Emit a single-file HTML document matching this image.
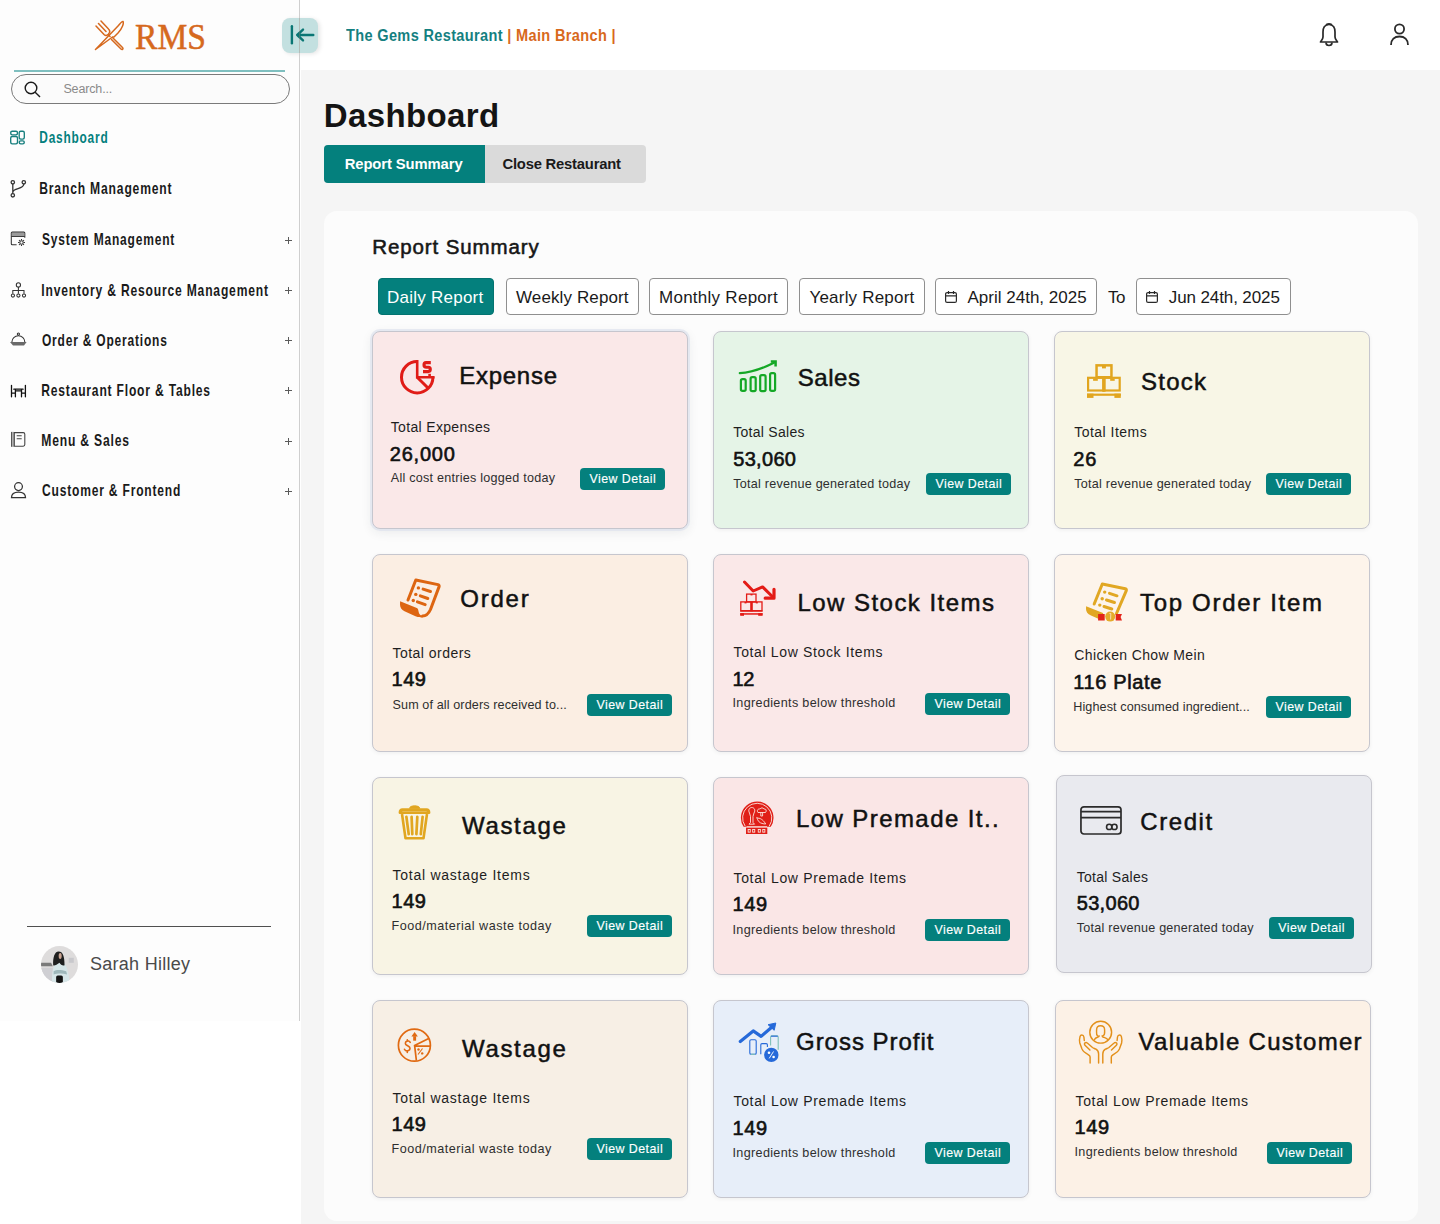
<!DOCTYPE html>
<html><head><meta charset="utf-8"><style>
*{margin:0;padding:0;box-sizing:border-box}
html,body{width:1440px;height:1224px;overflow:hidden;background:#fff;font-family:"Liberation Sans",sans-serif;color:#161616}
.a{position:absolute}
.t{position:absolute;white-space:nowrap;line-height:1}
#side{position:absolute;left:0;top:0;width:299px;height:1021px;background:#fdfdfd}
#hdr{position:absolute;left:300px;top:0;width:1140px;height:70px;background:#fff}
#main{position:absolute;left:301px;top:70px;width:1139px;height:1154px;background:#f5f5f5}
#panel{position:absolute;left:324px;top:211px;width:1094px;height:1010px;background:#fcfcfc;border-radius:13px}
.card{position:absolute;width:316px;height:198px;border:1px solid #c6c6ce;border-radius:8px;box-shadow:0 1px 4px rgba(0,0,0,0.06)}
.vdb{position:absolute;width:85px;height:22px;background:#04807d;border-radius:4px}
</style></head><body>
<div id="side"></div><div id="hdr"></div><div id="main"></div><div id="panel"></div>
<svg class="a" style="left:94px;top:20px;" width="30" height="31" viewBox="0 0 30 31" fill="none"><g stroke="#d6691e" stroke-width="1.5" fill="none" stroke-linecap="round" stroke-linejoin="round">
<path d="M1.5 29.5 L24 6 C26 3.5 28 1 29 1.5 C30 3 28.5 8 24 13 L20 17 L18.5 17 Z"/>
<path d="M2 6 L10 14.5 C11.5 16 13 15.5 14 14.5 M4.5 3.5 L12 11.5 M7 1 L14.5 9 C16 10.5 16 12.5 14.5 14 M14 14.5 L16 16.5"/>
<path d="M17.5 19.5 L27 29 C28 30 29 29.5 29 28.5 C29 28 28.5 27.5 28 27 L18.5 17.5"/>
</g></svg>
<div class="a" style="left:282px;top:18px;width:36px;height:35px;border-radius:8px;background:#c3e0e0;box-shadow:2px 1px 4px rgba(0,0,0,0.10)"></div>
<svg class="a" style="left:282px;top:18px;" width="36" height="35" viewBox="0 0 36 35" fill="none"><g stroke="#0a7674" stroke-width="2.4" stroke-linecap="round" stroke-linejoin="round" fill="none"><path d="M9.9 8.2 V25.3"/><path d="M15.2 17 H31.3 M21 11.6 L15.2 17 L21 22.4"/></g></svg>
<div class="a" style="left:299px;top:0;width:1px;height:18px;background:#cfcfcf"></div><div class="a" style="left:299px;top:53px;width:1px;height:968px;background:#cfcfcf"></div><div class="a" style="left:299px;top:18px;width:1px;height:35px;background:rgba(150,120,110,0.35)"></div>
<svg class="a" style="left:1319px;top:22px;" width="20" height="26" viewBox="0 0 20 26" fill="none"><g stroke="#2a2a2a" stroke-width="1.7" fill="none" stroke-linejoin="round"><path d="M10 2.5 C5.5 2.5 4 6 4 10 V15 C4 17 2.5 18.5 1.5 20 H18.5 C17.5 18.5 16 17 16 15 V10 C16 6 14.5 2.5 10 2.5Z"/><path d="M7.5 3.2 C7.5 1.5 12.5 1.5 12.5 3.2"/><path d="M7 20.5 C7 24.5 13 24.5 13 20.5"/></g></svg>
<svg class="a" style="left:1390px;top:23px;" width="19" height="23" viewBox="0 0 19 23" fill="none"><g stroke="#2a2a2a" stroke-width="1.8" fill="none"><circle cx="9.5" cy="6" r="4.6"/><path d="M1 22 C1 16.5 4.5 13.5 9.5 13.5 C14.5 13.5 18 16.5 18 22"/></g></svg>
<div class="a" style="left:14px;top:70px;width:271px;height:2px;background:#7fbfbf"></div>
<div class="a" style="left:11px;top:74px;width:279px;height:30px;border:1px solid #7a7a7a;border-radius:15px;background:#fbfbfb"></div>
<svg class="a" style="left:24px;top:81px;" width="17" height="17" viewBox="0 0 17 17" fill="none"><g stroke="#1a1a1a" stroke-width="1.4" fill="none"><circle cx="7" cy="7" r="5.8"/><path d="M11.2 11.2 L16 16"/></g></svg>
<svg class="a" style="left:0px;top:120px;" width="300" height="390" viewBox="0 120 300 390" fill="none">
<g stroke="#177f7e" stroke-width="1.35" fill="none">
<rect x="10.7" y="131.2" width="6.8" height="3.6" rx="1.5"/><rect x="10.7" y="136.5" width="6.8" height="7.3" rx="1.5"/>
<rect x="19.2" y="131.2" width="5.1" height="7.9" rx="1.5"/><rect x="19.2" y="140.8" width="5.1" height="3" rx="1.5"/>
</g>
<g stroke="#333" stroke-width="1.3" fill="none">
<circle cx="12.8" cy="182.3" r="1.7"/><circle cx="23.8" cy="182.3" r="1.7"/><circle cx="12.8" cy="195.3" r="1.7"/>
<path d="M12.8 184 V193.6 M23.8 184 C23.8 189.5 13.5 187.5 12.8 192"/>
</g>
<g stroke="#333" stroke-width="1.05" fill="none">
<path d="M16.6 244.8 H12.3 C11.7 244.8 11.3 244.4 11.3 243.8 V233.1 C11.3 232.5 11.7 232.1 12.3 232.1 H23.8 C24.4 232.1 24.8 232.5 24.8 233.1 V237.8"/>
<path d="M11.3 236.5 H24.8"/>
<circle cx="21.5" cy="242.5" r="1.7"/>
<path d="M21.5 239 V240.3 M21.5 244.7 V246 M18 242.5 H19.3 M23.7 242.5 H25 M19 240 L19.9 240.9 M23.1 244.1 L24 245 M19 245 L19.9 244.1 M23.1 240.9 L24 240"/>
</g>
<rect x="11.8" y="232.8" width="12.4" height="3.3" fill="#9a9a9a"/>
<g stroke="#333" stroke-width="1.05" fill="none">
<circle cx="18.4" cy="284.9" r="2.1"/><path d="M18.4 287 V293.8 M12.8 293.8 V290.5 H24 V293.8"/>
<circle cx="12.9" cy="295.5" r="1.6"/><circle cx="18.4" cy="295.5" r="1.6"/><circle cx="24" cy="295.5" r="1.6"/>
</g>
<g stroke="#333" stroke-width="1.05" fill="none">
<circle cx="18.4" cy="334.1" r="1.1"/>
<path d="M11.9 342 C11.9 338.3 14.8 335.8 18.4 335.8 C22 335.8 24.8 338.3 24.8 342"/>
</g>
<path d="M10 342 H26.6 L24 345.6 H13 Z" fill="#6a6a6a"/>
<g stroke="#111" stroke-width="1.3" fill="none" stroke-linecap="round">
<path d="M11.5 385.3 V396.8 M25.4 385.3 V396.8 M13.8 389.2 H23.1 M15.4 389.2 V396.8 M21.5 389.2 V396.8 M15.4 390.9 H21.5 M11.5 393.1 H15.4 M21.5 393.1 H25.4"/>
</g>
<rect x="11.1" y="431.9" width="1.2" height="14.9" fill="#444"/><rect x="12.2" y="431.9" width="1.9" height="14.9" fill="#aaa"/>
<g stroke="#444" stroke-width="1.1" fill="none">
<path d="M14.3 432.6 H23.2 C24.2 432.6 24.8 433.2 24.8 434.2 V444.6 C24.8 445.6 24.2 446.2 23.2 446.2 H14.3 Z"/>
<path d="M16.7 435.8 H21.7 M16.7 438.7 H21.7"/>
</g>
<g stroke="#333" stroke-width="1.25" fill="none">
<circle cx="18.5" cy="486.6" r="3.9"/>
<path d="M11.5 497.6 C11.5 494 14 492.2 18.5 492.2 C23 492.2 25.5 494 25.5 497.6 Z"/>
</g>
</svg>
<div class="a" style="left:285px;top:239.9px;width:7px;height:1.2px;background:#5a5a5a"></div><div class="a" style="left:287.9px;top:237.0px;width:1.2px;height:7px;background:#5a5a5a"></div>
<div class="a" style="left:285px;top:289.7px;width:7px;height:1.2px;background:#5a5a5a"></div><div class="a" style="left:287.9px;top:286.8px;width:1.2px;height:7px;background:#5a5a5a"></div>
<div class="a" style="left:285px;top:339.6px;width:7px;height:1.2px;background:#5a5a5a"></div><div class="a" style="left:287.9px;top:336.7px;width:1.2px;height:7px;background:#5a5a5a"></div>
<div class="a" style="left:285px;top:389.7px;width:7px;height:1.2px;background:#5a5a5a"></div><div class="a" style="left:287.9px;top:386.8px;width:1.2px;height:7px;background:#5a5a5a"></div>
<div class="a" style="left:285px;top:440.8px;width:7px;height:1.2px;background:#5a5a5a"></div><div class="a" style="left:287.9px;top:437.9px;width:1.2px;height:7px;background:#5a5a5a"></div>
<div class="a" style="left:285px;top:491.1px;width:7px;height:1.2px;background:#5a5a5a"></div><div class="a" style="left:287.9px;top:488.2px;width:1.2px;height:7px;background:#5a5a5a"></div>
<div class="a" style="left:27px;top:925.5px;width:244px;height:1.2px;background:#505050"></div>
<svg class="a" style="left:41px;top:946px;" width="37" height="37" viewBox="0 0 44 44" fill="none"><defs><clipPath id="av"><circle cx="22" cy="22" r="22"/></clipPath></defs>
<g clip-path="url(#av)">
<rect width="44" height="44" fill="#dedcdc"/>
<rect x="0" y="26" width="14" height="18" fill="#cfcfd3"/>
<path d="M0 20 H12 L14 24 H0 Z" fill="#7a7a7a"/>
<rect x="33" y="14" width="6" height="6" fill="#c8c8cc"/>
<path d="M13 44 C13 32 14 25 18 20 L27 20 C31 24 33 32 34 44 Z" fill="#d6e6e8"/>
<path d="M15 30 C18 28 24 28 30 30 L31 34 C25 32 19 33 15 34 Z" fill="#9fb8bb"/>
<path d="M14.5 23 C14 14 16 6.5 21 6.5 C26 6.5 28 12 28 23 C26 24 23 22 22 20 C19 22 16 24 14.5 23 Z" fill="#1f1f1f"/>
<ellipse cx="22.8" cy="11.8" rx="1.8" ry="3.6" fill="#caa492"/>
<rect x="18" y="35" width="8" height="9" rx="2" fill="#141414"/>
</g></svg>
<div class="a" style="left:324px;top:145px;width:322px;height:38px;border-radius:4px;background:#dadada"></div>
<div class="a" style="left:324px;top:145px;width:161px;height:38px;border-radius:4px 0 0 4px;background:#04807d"></div>
<div class="a" style="left:377.8px;top:278px;width:116.4px;height:37.4px;border-radius:4px;background:#04807d;border:1px solid #037370"></div>
<div class="a" style="left:505.5px;top:278px;width:133.2px;height:37.4px;border-radius:4px;background:#fff;border:1px solid #8f8f8f"></div>
<div class="a" style="left:649.4px;top:278px;width:139.1px;height:37.4px;border-radius:4px;background:#fff;border:1px solid #8f8f8f"></div>
<div class="a" style="left:799.4px;top:278px;width:125.2px;height:37.4px;border-radius:4px;background:#fff;border:1px solid #8f8f8f"></div>
<div class="a" style="left:935.3px;top:278px;width:162.0px;height:37.4px;border-radius:4px;background:#fff;border:1px solid #8f8f8f"></div>
<div class="a" style="left:1136.4px;top:278px;width:154.3px;height:37.4px;border-radius:4px;background:#fff;border:1px solid #8f8f8f"></div>
<svg class="a" style="left:945px;top:291px;" width="12" height="12" viewBox="0 0 12 12" fill="none"><g stroke="#2a2a2a" stroke-width="1.2" fill="none"><rect x="0.6" y="1.6" width="10.8" height="9.8" rx="1.5"/><path d="M0.6 4.8 H11.4 M3.5 0 V3 M8.5 0 V3"/></g></svg>
<svg class="a" style="left:1146px;top:291px;" width="12" height="12" viewBox="0 0 12 12" fill="none"><g stroke="#2a2a2a" stroke-width="1.2" fill="none"><rect x="0.6" y="1.6" width="10.8" height="9.8" rx="1.5"/><path d="M0.6 4.8 H11.4 M3.5 0 V3 M8.5 0 V3"/></g></svg>
<div class="card" style="left:372px;top:331px;background:#fae8e8;box-shadow:0 0 0 2px rgba(222,226,238,0.7),0 3px 12px rgba(30,40,60,0.09);"></div>
<svg class="a" style="left:395px;top:355px;overflow:visible" width="45" height="45" viewBox="0 0 45 45" fill="none"><g stroke="#e01c17" fill="none">
<path d="M22.2 6.5 A15.7 15.7 0 1 0 37.9 22.2" stroke-width="3"/>
<path d="M22.2 5 V22.2 H39.6" stroke-width="2.6"/>
<path d="M22.2 22.2 L33 33" stroke-width="3"/>
<path d="M35.8 7.6 H31 C29.3 7.6 29 9 29 10 C29 11.5 30 12.2 31.5 12.2 H33.5 C35 12.2 35.3 13.2 35.3 14.3 C35.3 15.5 34.8 16.6 33 16.6 H28" stroke-width="3.1"/>
<path d="M34.6 18.8 V21" stroke-width="2.6"/>
</g></svg>
<div class="vdb" style="left:580px;top:468px"></div>
<div class="card" style="left:713px;top:331px;background:#e5f4e7;"></div>
<svg class="a" style="left:734px;top:355px;overflow:visible" width="48" height="43" viewBox="0 0 48 43" fill="none"><g stroke="#14a826" fill="none">
<path d="M5.8 18.1 C14 17.8 26 14.8 40.5 7.5" stroke-width="2.2" stroke-linecap="round"/>
<path d="M36.8 6.6 H41.6 V11.4" stroke-width="2.5"/>
<rect x="6.9" y="24.1" width="4.8" height="11.7" rx="1.6" stroke-width="2.2"/>
<rect x="16.6" y="22.2" width="5.1" height="13.9" rx="1.6" stroke-width="2.2"/>
<rect x="26.2" y="20.2" width="5.4" height="15.9" rx="1.6" stroke-width="2.2"/>
<rect x="36.1" y="18.1" width="5" height="17.7" rx="1.6" stroke-width="2.2"/>
</g></svg>
<div class="vdb" style="left:926px;top:473px"></div>
<div class="card" style="left:1054px;top:331px;background:#f8f6e6;"></div>
<svg class="a" style="left:1082px;top:358px;overflow:visible" width="44" height="44" viewBox="0 0 44 44" fill="none"><g stroke="#e1a51f" fill="none">
<rect x="14.55" y="7.35" width="14.9" height="11.9" stroke-width="2.5"/>
<rect x="6.1" y="19.8" width="15.5" height="12.7" stroke-width="2.2"/>
<rect x="21.6" y="19.8" width="16.1" height="12.7" stroke-width="2.2"/>
</g><g fill="#e1a51f">
<rect x="20.3" y="19" width="3.4" height="14.6"/>
<rect x="20" y="7.9" width="3.9" height="2.5"/><rect x="11.1" y="20.6" width="4.7" height="2.2"/><rect x="28.2" y="20.6" width="4.5" height="2.2"/>
<rect x="5" y="35.6" width="33.8" height="2.2"/><rect x="5" y="35.6" width="6.5" height="4.3"/><rect x="32.4" y="35.6" width="6.4" height="4.3"/>
</g></svg>
<div class="vdb" style="left:1266px;top:473px"></div>
<div class="card" style="left:372px;top:554px;background:#fbeee3;"></div>
<svg class="a" style="left:396px;top:574px;overflow:visible" width="48" height="48" viewBox="0 0 48 48" fill="none"><g stroke="#dd6511" fill="none" stroke-linecap="round" stroke-linejoin="round">
<path d="M12 26 L19.8 6 L42 10.6 C43 10.9 43.4 11.8 43.1 12.6 L34.5 35.5 C32.5 40 30 42 26.5 42" stroke-width="3"/>
<path d="M27.1 15.1 L34.5 17.5 M24.3 21.8 L31.8 24.5 M21.4 27.8 L29.2 30.6" stroke-width="3"/>
</g><g fill="#dd6511">
<circle cx="22.4" cy="13.9" r="1.7"/><circle cx="19.8" cy="20.4" r="1.7"/><circle cx="17.3" cy="26.5" r="1.7"/>
<path d="M4.1 27.3 L20.8 34 C22 34.5 22.3 35.8 22.5 37.3 C22.9 40.2 24.5 41.5 26.5 42 L26.5 43.4 C24 43.5 21.5 43 19.5 42.2 L8.5 37.2 C5.5 35.8 4 33.5 4 30.5 Z"/>
</g></svg>
<div class="vdb" style="left:587px;top:694px"></div>
<div class="card" style="left:713px;top:554px;background:#fae8e8;"></div>
<svg class="a" style="left:734px;top:576px;overflow:visible" width="48" height="46" viewBox="0 0 48 46" fill="none"><g stroke="#e31b16" fill="none">
<path d="M10.5 6 L19.2 15 L28.6 10.9 L38.8 21" stroke-width="3" stroke-linecap="round" stroke-linejoin="round"/>
<path d="M40 13.3 V22.2 H31.2" stroke-width="3.2" stroke-linecap="round" stroke-linejoin="round"/>
<rect x="12.6" y="18.1" width="9.4" height="7.8" stroke-width="1.3"/>
<rect x="6.8" y="25.9" width="21.2" height="8.8" stroke-width="1.3"/>
</g><g fill="#e31b16">
<rect x="16.2" y="25.9" width="2.6" height="9.4"/>
<rect x="16.5" y="18" width="2" height="1.4"/><rect x="10.5" y="26" width="2" height="1.4"/><rect x="21.8" y="26" width="2" height="1.4"/>
<rect x="6.2" y="34.4" width="22.4" height="1.3"/>
<rect x="6.2" y="37.2" width="22.4" height="1.5"/><rect x="6.2" y="37.2" width="3.8" height="2.6"/><rect x="24.2" y="37.2" width="4.4" height="2.6"/>
</g></svg>
<div class="vdb" style="left:925px;top:693px"></div>
<div class="card" style="left:1054px;top:554px;background:#fdf4eb;"></div>
<svg class="a" style="left:1082px;top:578px;overflow:visible" width="48" height="48" viewBox="0 0 48 48" fill="none"><g stroke="#e1a723" fill="none" stroke-linecap="round" stroke-linejoin="round">
<path d="M12.2 26 L20.3 6 L43.3 10.7 C44.3 11 44.6 11.9 44.3 12.6 L34.5 35.5" stroke-width="3"/>
<path d="M27.5 15.3 L35 17.8 M24.5 22 L32.5 24.5 M22 28.5 L29.8 31" stroke-width="3"/>
</g><g fill="#e1a723">
<circle cx="22.7" cy="14.1" r="1.7"/><circle cx="20.2" cy="20.8" r="1.7"/><circle cx="17.8" cy="27.1" r="1.7"/>
<path d="M4.1 28.2 L21 35 L22 41 L18 41.5 L9 37.5 C5.5 36 4 33.5 4 31 Z"/>
</g>
<path d="M16.1 35.9 H22.7 V42.4 H16.1 Z M33.7 35.9 H40 L38.6 39.1 L40 42.4 H33.7 Z" fill="#e32419"/>
<circle cx="28.2" cy="38.6" r="5" fill="#e5ab2a"/>
<path d="M27.5 35.5 L28.8 35.5 L28.6 41.5" stroke="#f6dcb0" stroke-width="1"/></svg>
<div class="vdb" style="left:1266px;top:696px"></div>
<div class="card" style="left:372px;top:777px;background:#f8f4e4;"></div>
<svg class="a" style="left:392px;top:800px;overflow:visible" width="44" height="44" viewBox="0 0 44 44" fill="none"><g stroke="#e1a620" fill="none" stroke-linejoin="round">
<path d="M17.6 8.3 C17.6 5 27.7 5 27.7 8.3 Z" fill="#e1a620" stroke-width="1"/>
<path d="M10.5 9.6 H34.5 C36.5 9.6 37 11 37 12.7 H8 C8 11 8.5 9.6 10.5 9.6 Z" stroke-width="2.8"/>
<path d="M10 14 L13.5 38.3 H31.5 L35 14" stroke-width="2.6"/>
<path d="M14.4 16.9 L16.7 34.1 M19.6 16.9 L20.3 34.1 M25.3 16.9 L24.4 34.1 M30.6 16.9 L28.8 34.1" stroke-width="2.7" stroke-linecap="round"/>
</g></svg>
<div class="vdb" style="left:587px;top:915px"></div>
<div class="card" style="left:713px;top:777px;background:#fae6e6;"></div>
<svg class="a" style="left:736px;top:797px;overflow:visible" width="44" height="44" viewBox="0 0 44 44" fill="none"><path d="M7.6 29.8 A16.3 16.3 0 1 1 34.8 29.8 Z" fill="#e01f17"/>
<path d="M9.2 29.2 A14.6 14.6 0 1 1 33.2 29.2" stroke="#fbe3dc" stroke-width="0.9" fill="none"/>
<rect x="10" y="30.6" width="21.3" height="6.4" fill="#e01f17"/>
<path d="M10.6 29.6 H31" stroke="#fbe3dc" stroke-width="0.8"/>
<g fill="#fbe3dc"><rect x="11.7" y="32" width="3" height="3.6"/><rect x="16.2" y="32" width="3" height="3.6"/><rect x="21.8" y="32" width="3" height="3.6"/><rect x="26.3" y="32" width="3" height="3.6"/></g>
<g fill="#e01f17"><rect x="12.6" y="32.9" width="1.2" height="1.8"/><rect x="17.1" y="32.9" width="1.2" height="1.8"/><rect x="22.7" y="32.9" width="1.2" height="1.8"/><rect x="27.2" y="32.9" width="1.2" height="1.8"/></g>
<g stroke="#fbe3dc" stroke-width="0.9" fill="none" stroke-linejoin="round">
<path d="M13.5 16 C11.8 13 13.5 10.5 15.8 10.5 C18.2 10.5 19.8 13 18 16 L17 19.5 L17 25.5 L18.5 27.2 H13 L14.5 25.5 V19.5 Z"/>
<path d="M22 15.5 C20.5 13.5 22 11.5 24 12 C25 10.5 27 10.5 28 12 C30 11.5 31 13.8 29.5 15.5 Z M24.8 15.5 V19 H26.6 V15.5"/>
<path d="M20.7 20.5 L22 21.2 C25 21 28 24 29.7 27 C26 27 22.5 25.5 21.5 22.5 Z"/>
</g></svg>
<div class="vdb" style="left:925px;top:919px"></div>
<div class="card" style="left:1056px;top:775px;background:#e9eaef;"></div>
<svg class="a" style="left:1076px;top:800px;overflow:visible" width="52" height="40" viewBox="0 0 52 40" fill="none"><g stroke="#2b2b2b" fill="none">
<rect x="4.95" y="6.8" width="40.05" height="27.2" rx="3" stroke-width="1.7"/>
<path d="M4.95 11.7 H45 M4.95 17.7 H45" stroke-width="1.7"/>
<circle cx="33.2" cy="26.9" r="2.65" stroke-width="1.6"/><circle cx="38.4" cy="26.9" r="2.65" stroke-width="1.6"/>
</g></svg>
<div class="vdb" style="left:1268.75px;top:917px"></div>
<div class="card" style="left:372px;top:1000px;background:#f7efe5;"></div>
<svg class="a" style="left:392px;top:1022px;overflow:visible" width="44" height="44" viewBox="0 0 44 44" fill="none"><g stroke="#e06a12" fill="none">
<circle cx="22.4" cy="23.2" r="16" stroke-width="1.7"/>
<path d="M36.7 16.5 L22.6 23.4 L24.4 38.6 M22.6 24.1 H38.5" stroke-width="1.7"/>
<path d="M18.2 20.3 C17.5 18.8 15.8 18.6 14.7 19.2 C13 20 12.8 22.3 14.8 23.3 L16.5 24.2 C18.5 25.2 18.5 27.8 16.5 28.6 C15 29.2 13.3 28.6 12.5 27.3 M15.3 17.8 V19 M15.3 28.8 V30.4" stroke-width="1.6" stroke-linecap="round"/>
<path d="M30.5 26.5 L26 32.5" stroke-width="1.1"/>
</g><g fill="#e06a12">
<path d="M22.6 10.1 L19.4 14.4 H25.9 Z"/><rect x="21.2" y="14.2" width="2.9" height="4.5"/>
<circle cx="26.5" cy="27.5" r="1.2"/><circle cx="30.2" cy="31.4" r="1.2"/>
</g></svg>
<div class="vdb" style="left:587px;top:1138px"></div>
<div class="card" style="left:713px;top:1000px;background:#e7eef9;"></div>
<svg class="a" style="left:734px;top:1018px;overflow:visible" width="50" height="48" viewBox="0 0 50 48" fill="none"><path d="M6.3 23.5 L19.2 12.9 L27.1 18.4 L38 9" stroke="#2669d9" stroke-width="3.2" fill="none" stroke-linecap="round" stroke-linejoin="round"/>
<path d="M41.8 5 L34.1 6.7 L40.2 12.3 Z" fill="#2669d9" stroke="#2669d9" stroke-width="1" stroke-linejoin="round"/>
<rect x="15.8" y="21.7" width="6.4" height="14.5" rx="1.3" stroke="#2669d9" stroke-width="1.1" fill="none"/>
<path d="M17 36.3 H21" stroke="#80c0b8" stroke-width="1.2"/>
<path d="M26.8 36.2 V26.8 C26.8 26 27.2 25.6 28 25.6 H32.2 C33 25.6 33.4 26 33.4 26.8 V29" stroke="#2669d9" stroke-width="1.1" fill="none"/>
<path d="M36.6 27.5 V19 C36.6 18.2 37 17.8 37.8 17.8 H43 C43.8 17.8 44.2 18.2 44.2 19 V31.8" stroke="#80c0b8" stroke-width="1.1" fill="none"/>
<path d="M37 18.2 H43.8" stroke="#2669d9" stroke-width="1.1"/>
<circle cx="37.3" cy="36.9" r="7.2" fill="#2669d9"/>
<g fill="#ffffff"><circle cx="35" cy="34.8" r="1.3"/><circle cx="39.6" cy="39" r="1.3"/></g>
<path d="M39.5 33.5 L35.2 40.4" stroke="#fff" stroke-width="0.9"/></svg>
<div class="vdb" style="left:925px;top:1142px"></div>
<div class="card" style="left:1055px;top:1000px;background:#fcf1e6;"></div>
<svg class="a" style="left:1074px;top:1016px;overflow:visible" width="52" height="52" viewBox="0 0 52 52" fill="none"><g stroke="#e3901a" stroke-width="1.45" fill="none" stroke-linecap="round" stroke-linejoin="round">
<circle cx="26.7" cy="16.2" r="10.9"/>
<path d="M23.5 19.8 C22 18.5 22.6 15.8 22.6 13.8 C22.6 11 24.4 9.8 26.6 9.8 C28.8 9.8 30.6 11 30.6 13.8 C30.6 15.8 31.2 18.5 29.3 19.6"/>
<path d="M20.5 23.5 C21 22 22.5 21.5 24.8 20.6 C25.3 20.4 25 20 25 19.7 M28.2 19.7 C28.2 20.3 28.2 20.6 29 21 C31 21.8 33 22.3 33.8 23.6"/>
<path d="M16.1 47 V41 C16.1 40 15.5 39.5 14.5 38.8 L10.3 36 C9.2 35.3 8.5 34 8 33 L5.8 27 C5.5 25.5 5.6 22 6 20.6 C6.3 19.5 7 19 7.8 19 C8.8 19 9.7 19.8 9.9 21 L10.3 24.5"/>
<path d="M15.9 34 L11 29.2 C10.3 28.5 10.3 27.5 11 26.9 C11.7 26.3 12.7 26.4 13.3 27 L18.5 31.5 C19.5 32.2 21 32.6 22 33.2 C23.6 34.2 24.6 36 24.6 38 V47"/>
<path d="M37.3 47 V41 C37.3 40 37.9 39.5 38.9 38.8 L43.1 36 C44.2 35.3 44.9 34 45.4 33 L47.6 27 C47.9 25.5 47.8 22 47.4 20.6 C47.1 19.5 46.4 19 45.6 19 C44.6 19 43.7 19.8 43.5 21 L43.1 24.5"/>
<path d="M37.5 34 L42.4 29.2 C43.1 28.5 43.1 27.5 42.4 26.9 C41.7 26.3 40.7 26.4 40.1 27 L34.9 31.5 C33.9 32.2 32.4 32.6 31.4 33.2 C29.8 34.2 28.8 36 28.8 38 V47"/>
</g></svg>
<div class="vdb" style="left:1267px;top:1142px"></div>
<div class="t" style="left:134.50px;top:19.97px;font-size:35px;color:#d6691e;font-family:'Liberation Serif',serif;transform:scaleX(0.9585);transform-origin:1.00px 0;-webkit-text-stroke:0.5px #d6691e;">RMS</div>
<div class="t" style="left:346.40px;top:27.98px;font-size:16.8px;color:#148080;font-weight:bold;transform:scaleX(0.8665);transform-origin:0.00px 0;letter-spacing:0.4px;">The Gems Restaurant <span style="color:#d8691c">| Main Branch |</span></div>
<div class="t" style="left:63.40px;top:83.12px;font-size:12.5px;color:#8a8a8a;letter-spacing:-0.144px;">Search...</div>
<div class="t" style="left:38.50px;top:128.90px;font-size:16.3px;color:#04807d;font-weight:bold;transform:scaleX(0.7291);transform-origin:1.00px 0;letter-spacing:1.1px;">Dashboard</div>
<div class="t" style="left:38.50px;top:179.60px;font-size:16.3px;color:#1a1a1a;font-weight:bold;transform:scaleX(0.7445);transform-origin:1.00px 0;letter-spacing:1.1px;">Branch Management</div>
<div class="t" style="left:41.50px;top:231.40px;font-size:16.3px;color:#1a1a1a;font-weight:bold;transform:scaleX(0.7366);transform-origin:0.00px 0;letter-spacing:1.1px;">System Management</div>
<div class="t" style="left:40.60px;top:281.50px;font-size:16.3px;color:#1a1a1a;font-weight:bold;transform:scaleX(0.7425);transform-origin:1.00px 0;letter-spacing:1.1px;">Inventory &amp; Resource Management</div>
<div class="t" style="left:41.60px;top:331.60px;font-size:16.3px;color:#1a1a1a;font-weight:bold;transform:scaleX(0.7353);transform-origin:0.00px 0;letter-spacing:1.1px;">Order &amp; Operations</div>
<div class="t" style="left:40.60px;top:381.90px;font-size:16.3px;color:#1a1a1a;font-weight:bold;transform:scaleX(0.7408);transform-origin:1.00px 0;letter-spacing:1.1px;">Restaurant Floor &amp; Tables</div>
<div class="t" style="left:40.60px;top:431.90px;font-size:16.3px;color:#1a1a1a;font-weight:bold;transform:scaleX(0.7442);transform-origin:1.00px 0;letter-spacing:1.1px;">Menu &amp; Sales</div>
<div class="t" style="left:41.60px;top:481.70px;font-size:16.3px;color:#1a1a1a;font-weight:bold;transform:scaleX(0.7390);transform-origin:0.00px 0;letter-spacing:1.1px;">Customer &amp; Frontend</div>
<div class="t" style="left:90.00px;top:955.46px;font-size:18px;color:#4a4a4a;letter-spacing:0.269px;">Sarah Hilley</div>
<div class="t" style="left:323.70px;top:99.07px;font-size:33px;color:#141414;font-weight:bold;letter-spacing:0.387px;">Dashboard</div>
<div class="t" style="left:344.70px;top:157.17px;font-size:14.8px;color:#ffffff;font-weight:bold;letter-spacing:-0.100px;">Report Summary</div>
<div class="t" style="left:502.50px;top:157.17px;font-size:14.8px;color:#1a1a1a;font-weight:bold;letter-spacing:-0.218px;">Close Restaurant</div>
<div class="t" style="left:372.30px;top:236.95px;font-size:20.5px;color:#161616;letter-spacing:0.886px;-webkit-text-stroke:0.55px #161616;">Report Summary</div>
<div class="t" style="left:387.00px;top:288.81px;font-size:17px;color:#ffffff;letter-spacing:0.245px;">Daily Report</div>
<div class="t" style="left:516.00px;top:288.81px;font-size:17px;color:#1a1a1a;letter-spacing:0.113px;">Weekly Report</div>
<div class="t" style="left:659.00px;top:288.81px;font-size:17px;color:#1a1a1a;letter-spacing:0.265px;">Monthly Report</div>
<div class="t" style="left:809.50px;top:288.81px;font-size:17px;color:#1a1a1a;letter-spacing:0.196px;">Yearly Report</div>
<div class="t" style="left:967.50px;top:288.81px;font-size:17px;color:#1a1a1a;letter-spacing:0.005px;">April 24th, 2025</div>
<div class="t" style="left:1108.00px;top:288.81px;font-size:17px;color:#1a1a1a;letter-spacing:-0.500px;">To</div>
<div class="t" style="left:1168.80px;top:288.81px;font-size:17px;color:#1a1a1a;letter-spacing:-0.110px;">Jun 24th, 2025</div>
<div class="t" style="left:459.20px;top:364.08px;font-size:24px;color:#111111;letter-spacing:0.742px;-webkit-text-stroke:0.5px #111111;">Expense</div>
<div class="t" style="left:390.75px;top:420.15px;font-size:14px;color:#1e1e1e;letter-spacing:0.335px;">Total Expenses</div>
<div class="t" style="left:389.75px;top:443.87px;font-size:20px;color:#111111;letter-spacing:0.790px;-webkit-text-stroke:0.6px #111111;">26,000</div>
<div class="t" style="left:390.75px;top:472.33px;font-size:12.6px;color:#2e2e2e;letter-spacing:0.242px;">All cost entries logged today</div>
<div class="t" style="left:589.50px;top:472.50px;font-size:12.4px;color:#ffffff;letter-spacing:0.440px;-webkit-text-stroke:0.15px #ffffff;">View Detail</div>
<div class="t" style="left:797.75px;top:365.93px;font-size:24px;color:#111111;letter-spacing:0.554px;-webkit-text-stroke:0.5px #111111;">Sales</div>
<div class="t" style="left:733.25px;top:425.15px;font-size:14px;color:#1e1e1e;letter-spacing:0.272px;">Total Sales</div>
<div class="t" style="left:733.25px;top:448.57px;font-size:20px;color:#111111;letter-spacing:0.310px;-webkit-text-stroke:0.6px #111111;">53,060</div>
<div class="t" style="left:733.25px;top:478.08px;font-size:12.6px;color:#2e2e2e;letter-spacing:0.234px;">Total revenue generated today</div>
<div class="t" style="left:935.50px;top:477.50px;font-size:12.4px;color:#ffffff;letter-spacing:0.440px;-webkit-text-stroke:0.15px #ffffff;">View Detail</div>
<div class="t" style="left:1141.00px;top:369.68px;font-size:24px;color:#111111;letter-spacing:1.244px;-webkit-text-stroke:0.5px #111111;">Stock</div>
<div class="t" style="left:1074.25px;top:425.15px;font-size:14px;color:#1e1e1e;letter-spacing:0.474px;">Total Items</div>
<div class="t" style="left:1073.25px;top:448.57px;font-size:20px;color:#111111;letter-spacing:0.951px;-webkit-text-stroke:0.6px #111111;">26</div>
<div class="t" style="left:1074.25px;top:478.08px;font-size:12.6px;color:#2e2e2e;letter-spacing:0.234px;">Total revenue generated today</div>
<div class="t" style="left:1275.50px;top:477.50px;font-size:12.4px;color:#ffffff;letter-spacing:0.440px;-webkit-text-stroke:0.15px #ffffff;">View Detail</div>
<div class="t" style="left:460.25px;top:587.18px;font-size:24px;color:#111111;letter-spacing:1.786px;-webkit-text-stroke:0.5px #111111;">Order</div>
<div class="t" style="left:392.50px;top:646.15px;font-size:14px;color:#1e1e1e;letter-spacing:0.465px;">Total orders</div>
<div class="t" style="left:391.50px;top:669.32px;font-size:20px;color:#111111;letter-spacing:0.527px;-webkit-text-stroke:0.6px #111111;">149</div>
<div class="t" style="left:392.50px;top:698.83px;font-size:12.6px;color:#2e2e2e;letter-spacing:0.112px;">Sum of all orders received to...</div>
<div class="t" style="left:596.50px;top:698.50px;font-size:12.4px;color:#ffffff;letter-spacing:0.440px;-webkit-text-stroke:0.15px #ffffff;">View Detail</div>
<div class="t" style="left:797.40px;top:590.88px;font-size:24px;color:#111111;letter-spacing:1.467px;-webkit-text-stroke:0.5px #111111;">Low Stock Items</div>
<div class="t" style="left:733.50px;top:645.05px;font-size:14px;color:#1e1e1e;letter-spacing:0.642px;">Total Low Stock Items</div>
<div class="t" style="left:732.50px;top:668.77px;font-size:20px;color:#111111;letter-spacing:-0.323px;-webkit-text-stroke:0.6px #111111;">12</div>
<div class="t" style="left:732.50px;top:697.33px;font-size:12.6px;color:#2e2e2e;letter-spacing:0.338px;">Ingredients below threshold</div>
<div class="t" style="left:934.50px;top:697.50px;font-size:12.4px;color:#ffffff;letter-spacing:0.440px;-webkit-text-stroke:0.15px #ffffff;">View Detail</div>
<div class="t" style="left:1140.00px;top:590.93px;font-size:24px;color:#111111;letter-spacing:1.688px;-webkit-text-stroke:0.5px #111111;">Top Order Item</div>
<div class="t" style="left:1074.25px;top:648.15px;font-size:14px;color:#1e1e1e;letter-spacing:0.374px;">Chicken Chow Mein</div>
<div class="t" style="left:1073.25px;top:672.32px;font-size:20px;color:#111111;letter-spacing:0.637px;-webkit-text-stroke:0.6px #111111;">116 Plate</div>
<div class="t" style="left:1073.25px;top:700.58px;font-size:12.6px;color:#2e2e2e;letter-spacing:0.100px;">Highest consumed ingredient...</div>
<div class="t" style="left:1275.50px;top:700.50px;font-size:12.4px;color:#ffffff;letter-spacing:0.440px;-webkit-text-stroke:0.15px #ffffff;">View Detail</div>
<div class="t" style="left:462.00px;top:814.18px;font-size:24px;color:#111111;letter-spacing:1.671px;-webkit-text-stroke:0.5px #111111;">Wastage</div>
<div class="t" style="left:392.50px;top:867.65px;font-size:14px;color:#1e1e1e;letter-spacing:0.749px;">Total wastage Items</div>
<div class="t" style="left:391.50px;top:890.57px;font-size:20px;color:#111111;letter-spacing:0.527px;-webkit-text-stroke:0.6px #111111;">149</div>
<div class="t" style="left:391.50px;top:920.08px;font-size:12.6px;color:#2e2e2e;letter-spacing:0.504px;">Food/material waste today</div>
<div class="t" style="left:596.50px;top:919.50px;font-size:12.4px;color:#ffffff;letter-spacing:0.440px;-webkit-text-stroke:0.15px #ffffff;">View Detail</div>
<div class="t" style="left:796.00px;top:806.68px;font-size:24px;color:#111111;letter-spacing:1.417px;-webkit-text-stroke:0.5px #111111;">Low Premade It..</div>
<div class="t" style="left:733.50px;top:871.40px;font-size:14px;color:#1e1e1e;letter-spacing:0.661px;">Total Low Premade Items</div>
<div class="t" style="left:732.50px;top:894.32px;font-size:20px;color:#111111;letter-spacing:0.677px;-webkit-text-stroke:0.6px #111111;">149</div>
<div class="t" style="left:732.50px;top:923.83px;font-size:12.6px;color:#2e2e2e;letter-spacing:0.338px;">Ingredients below threshold</div>
<div class="t" style="left:934.50px;top:923.50px;font-size:12.4px;color:#ffffff;letter-spacing:0.440px;-webkit-text-stroke:0.15px #ffffff;">View Detail</div>
<div class="t" style="left:1140.25px;top:809.68px;font-size:24px;color:#111111;letter-spacing:1.580px;-webkit-text-stroke:0.5px #111111;">Credit</div>
<div class="t" style="left:1076.75px;top:869.90px;font-size:14px;color:#1e1e1e;letter-spacing:0.272px;">Total Sales</div>
<div class="t" style="left:1076.75px;top:893.07px;font-size:20px;color:#111111;letter-spacing:0.310px;-webkit-text-stroke:0.6px #111111;">53,060</div>
<div class="t" style="left:1076.75px;top:921.83px;font-size:12.6px;color:#2e2e2e;letter-spacing:0.234px;">Total revenue generated today</div>
<div class="t" style="left:1278.25px;top:921.50px;font-size:12.4px;color:#ffffff;letter-spacing:0.440px;-webkit-text-stroke:0.15px #ffffff;">View Detail</div>
<div class="t" style="left:462.00px;top:1037.18px;font-size:24px;color:#111111;letter-spacing:1.671px;-webkit-text-stroke:0.5px #111111;">Wastage</div>
<div class="t" style="left:392.50px;top:1090.65px;font-size:14px;color:#1e1e1e;letter-spacing:0.749px;">Total wastage Items</div>
<div class="t" style="left:391.50px;top:1113.57px;font-size:20px;color:#111111;letter-spacing:0.527px;-webkit-text-stroke:0.6px #111111;">149</div>
<div class="t" style="left:391.50px;top:1143.08px;font-size:12.6px;color:#2e2e2e;letter-spacing:0.504px;">Food/material waste today</div>
<div class="t" style="left:596.50px;top:1142.50px;font-size:12.4px;color:#ffffff;letter-spacing:0.440px;-webkit-text-stroke:0.15px #ffffff;">View Detail</div>
<div class="t" style="left:796.00px;top:1030.18px;font-size:24px;color:#111111;letter-spacing:0.975px;-webkit-text-stroke:0.5px #111111;">Gross Profit</div>
<div class="t" style="left:733.50px;top:1094.40px;font-size:14px;color:#1e1e1e;letter-spacing:0.661px;">Total Low Premade Items</div>
<div class="t" style="left:732.50px;top:1117.57px;font-size:20px;color:#111111;letter-spacing:0.677px;-webkit-text-stroke:0.6px #111111;">149</div>
<div class="t" style="left:732.50px;top:1146.83px;font-size:12.6px;color:#2e2e2e;letter-spacing:0.338px;">Ingredients below threshold</div>
<div class="t" style="left:934.50px;top:1146.50px;font-size:12.4px;color:#ffffff;letter-spacing:0.440px;-webkit-text-stroke:0.15px #ffffff;">View Detail</div>
<div class="t" style="left:1138.60px;top:1029.98px;font-size:24px;color:#111111;letter-spacing:1.292px;-webkit-text-stroke:0.5px #111111;">Valuable Customer</div>
<div class="t" style="left:1075.50px;top:1094.15px;font-size:14px;color:#1e1e1e;letter-spacing:0.661px;">Total Low Premade Items</div>
<div class="t" style="left:1074.50px;top:1117.47px;font-size:20px;color:#111111;letter-spacing:0.677px;-webkit-text-stroke:0.6px #111111;">149</div>
<div class="t" style="left:1074.50px;top:1146.33px;font-size:12.6px;color:#2e2e2e;letter-spacing:0.338px;">Ingredients below threshold</div>
<div class="t" style="left:1276.50px;top:1146.50px;font-size:12.4px;color:#ffffff;letter-spacing:0.440px;-webkit-text-stroke:0.15px #ffffff;">View Detail</div>
</body></html>
